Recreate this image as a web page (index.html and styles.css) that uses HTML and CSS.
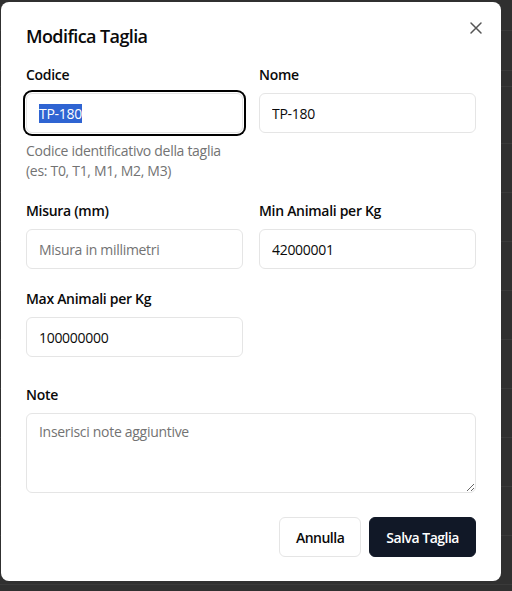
FILE: index.html
```html
<!DOCTYPE html>
<html lang="it">
<head>
<meta charset="utf-8">
<title>Modifica Taglia</title>
<link rel="stylesheet" href="styles.css">
</head>
<body>
<div class="page">
  <div class="row r1"></div>
  <div class="row r2"></div>
  <div class="row r3"></div>
  <div class="row r4"></div>
  <div class="row"></div>
  <div class="row"></div>
  <div class="row"></div>
  <div class="row"></div>
  <div class="row"></div>
  <div class="row"></div>
  <div class="row"></div>
  <div class="row"></div>
  <div class="row"></div>
</div>

<div class="dialog" role="dialog" aria-labelledby="dlg-title">
  <button class="close" type="button" aria-label="Chiudi">
    <svg width="16" height="16" viewBox="0 0 16 16" fill="none" stroke="currentColor" stroke-width="1.5" stroke-linecap="round"><path d="M3 3l10 10M13 3L3 13"/></svg>
  </button>
  <h2 class="title" id="dlg-title">Modifica Taglia</h2>

  <form class="form">
    <div class="grid">
      <div class="field">
        <label class="label">Codice</label>
        <div class="input focused" role="textbox"><span class="sel">TP-180</span></div>
        <p class="help">Codice identificativo della taglia (es: T0, T1, M1, M2, M3)</p>
      </div>
      <div class="field">
        <label class="label">Nome</label>
        <input class="input" type="text" value="TP-180">
      </div>
    </div>

    <div class="grid">
      <div class="field">
        <label class="label">Misura (mm)</label>
        <input class="input" type="text" placeholder="Misura in millimetri">
      </div>
      <div class="field">
        <label class="label">Min Animali per Kg</label>
        <input class="input" type="text" value="42000001">
      </div>
    </div>

    <div class="grid">
      <div class="field">
        <label class="label">Max Animali per Kg</label>
        <input class="input" type="text" value="100000000">
      </div>
      <div class="field"></div>
    </div>

    <div class="field note">
      <label class="label">Note</label>
      <textarea class="textarea" placeholder="Inserisci note aggiuntive"></textarea>
    </div>

    <div class="actions">
      <button type="button" class="btn btn-outline">Annulla</button>
      <button type="button" class="btn btn-primary">Salva Taglia</button>
    </div>
  </form>
</div>
</body>
</html>
```

FILE: styles.css
```css
html, body {
  margin: 0;
  padding: 0;
}
body {
  background: #303030;
  font-family: "Open Sans", "Noto Sans", sans-serif;
  color: #0a0a0a;
  letter-spacing: -0.3px;
  width: 512px;
  height: 591px;
  overflow: hidden;
}

.page {
  display: flex;
  flex-direction: column;
}
.row {
  height: 48px;
  border-bottom: 1px solid #3a3a3a;
}
.row.r1 { height: 30px; }
.row.r2 { height: 39px; }
.row.r3 { height: 15px; }
.row.r4 { height: 56px; }

.dialog {
  position: fixed;
  left: 1px;
  top: 2px;
  width: 500px;
  height: 579px;
  box-sizing: border-box;
  padding: 24px 25px 24px 25px;
  background: #ffffff;
  border-radius: 8px;
}

.close {
  position: absolute;
  right: 17px;
  top: 18px;
  width: 16px;
  height: 16px;
  padding: 0;
  border: 0;
  background: transparent;
  color: #555;
  display: flex;
}

.title {
  margin: 0;
  font-size: 18px;
  line-height: 20px;
  font-weight: 600;
  letter-spacing: -0.6px;
}

.form {
  margin-top: 19px;
  display: flex;
  flex-direction: column;
}

.grid {
  display: grid;
  grid-template-columns: 1fr 1fr;
  column-gap: 16px;
  margin-bottom: 20px;
}

.field {
  display: flex;
  flex-direction: column;
  gap: 8px;
  min-width: 0;
}
.field.note {
  margin-top: 8px;
}

.label {
  font-size: 14px;
  line-height: 20px;
  font-weight: 600;
  color: #0a0a0a;
}

.input {
  box-sizing: border-box;
  height: 40px;
  width: 100%;
  margin: 0;
  padding: 0 12px;
  border: 1px solid #e5e5e5;
  border-radius: 6px;
  background: #fff;
  font-family: inherit;
  font-size: 14px;
  letter-spacing: inherit;
  color: #0a0a0a;
  outline: none;
  display: flex;
  align-items: center;
}
.input::placeholder {
  color: #737373;
}
.input.focused {
  box-shadow: 0 0 0 1px #fff, 0 0 0 3px #000;
}
.sel {
  background: #2f64d2;
  color: #fff;
  line-height: 19px;
}

.help {
  margin: 0;
  font-size: 14px;
  line-height: 20px;
  color: #737373;
}

.textarea {
  box-sizing: border-box;
  height: 80px;
  width: 100%;
  margin: 0;
  padding: 8px 12px;
  border: 1px solid #e5e5e5;
  border-radius: 6px;
  font-family: inherit;
  font-size: 14px;
  letter-spacing: inherit;
  line-height: 20px;
  color: #0a0a0a;
  outline: none;
  resize: vertical;
}
.textarea::placeholder {
  color: #737373;
}

.actions {
  margin-top: 24px;
  display: flex;
  justify-content: flex-end;
  gap: 8px;
}
.btn {
  box-sizing: border-box;
  height: 40px;
  padding: 0 16px;
  border-radius: 6px;
  font-family: inherit;
  font-size: 14px;
  font-weight: 600;
  letter-spacing: -0.5px;
  cursor: pointer;
}
.btn-outline {
  background: #fff;
  border: 1px solid #e5e5e5;
  color: #0a0a0a;
}
.btn-primary {
  background: #111827;
  border: 1px solid #111827;
  color: #fff;
}
```
